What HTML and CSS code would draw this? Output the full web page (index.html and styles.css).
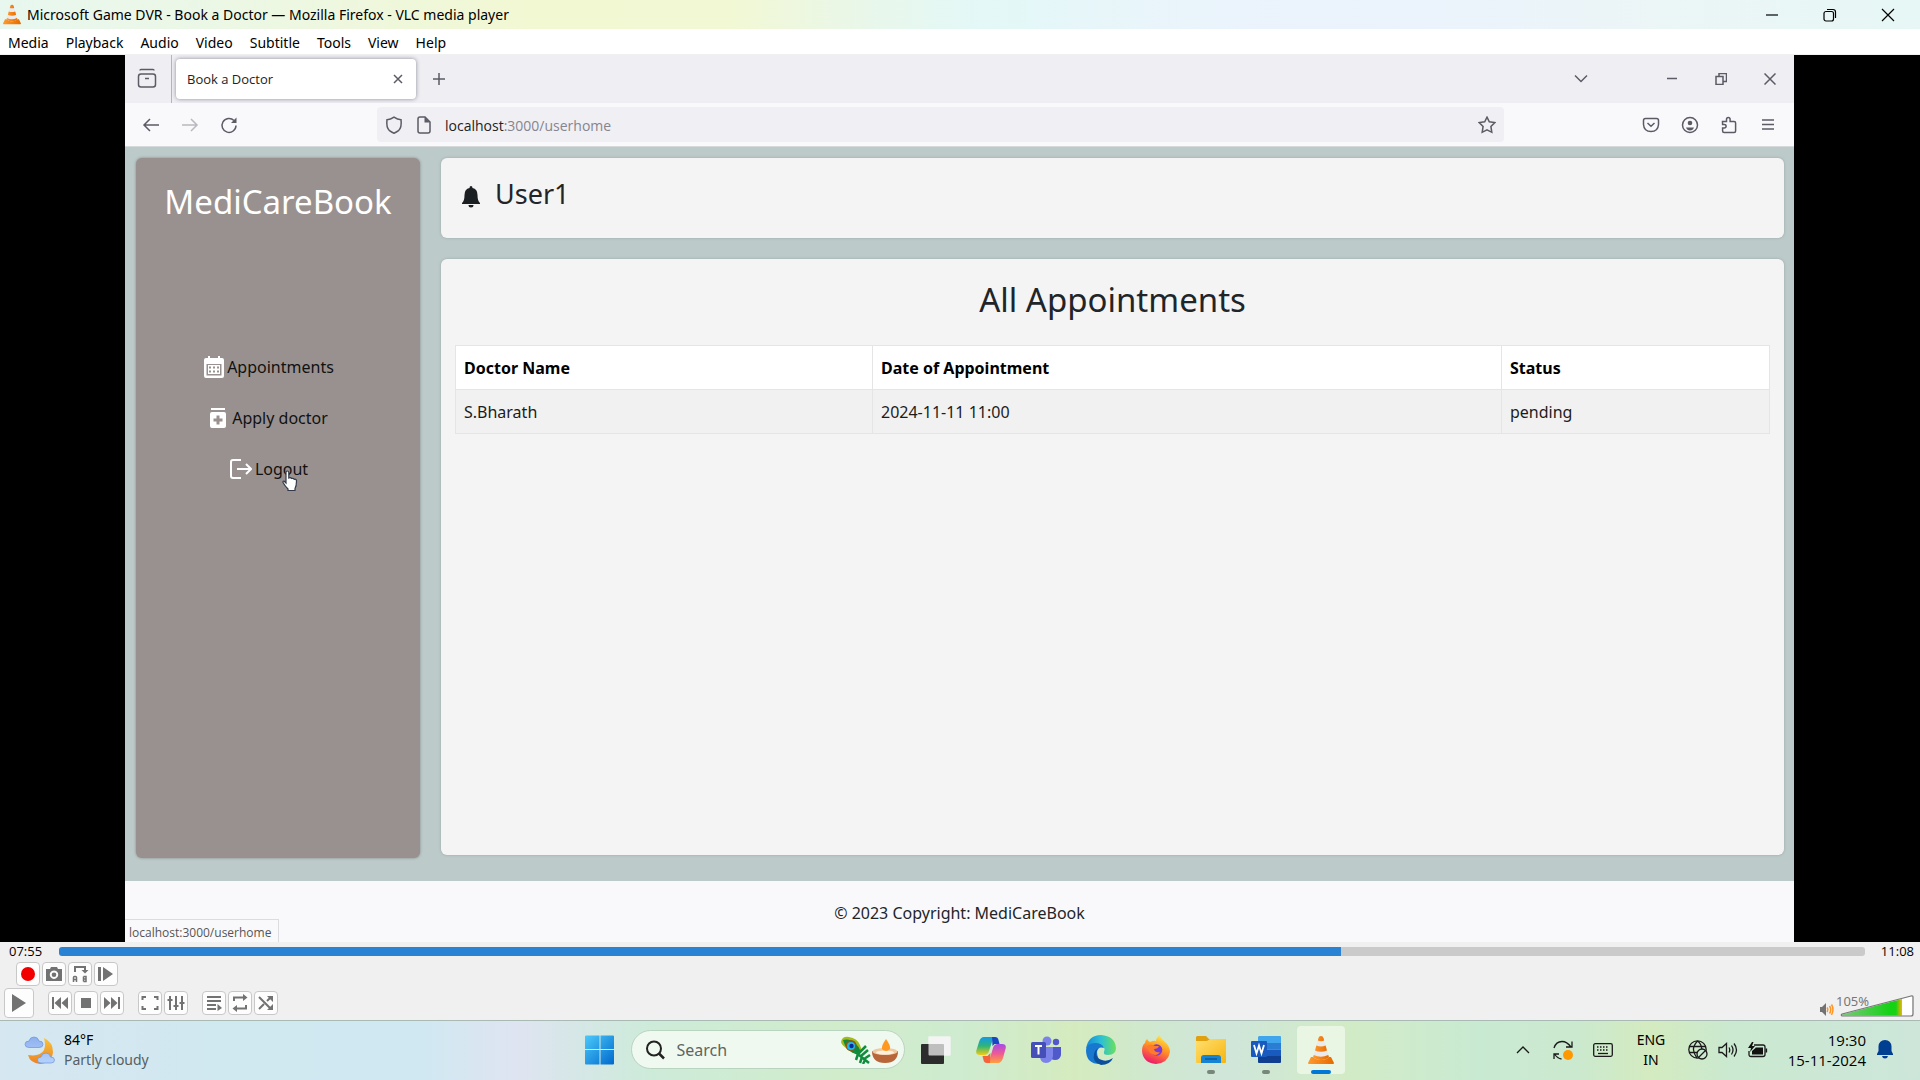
FILE: index.html
```html
<!DOCTYPE html>
<html lang="en">
<head>
<meta charset="utf-8">
<title>VLC media player</title>
<link rel="stylesheet" href="styles.css">
</head>
<body>
<svg width="0" height="0" class="defs" aria-hidden="true">
  <defs>
    <linearGradient id="cone" x1="0" x2="1"><stop offset="0" stop-color="#ff9a2e"/><stop offset="1" stop-color="#e56a00"/></linearGradient>
    <symbol id="vlc" viewBox="0 0 26 30">
      <path d="M3 22h20l3 6q0 1-1 1H1q-1 0-1-1z" fill="url(#cone)"/>
      <path d="M13 1q2 0 2.500 2l5.500 19q-3 3-8 3t-8-3L10.500 3q.5-2 2.500-2z" fill="#e9e9ee"/>
      <path d="M10.500 3q.5-2 2.500-2t2.500 2l.7 2.500q-3 1.300-6.400 0zM8.400 10.500q4.600 1.800 9.200 0l1.400 5q-6 2.500-12 0zM5.800 20q7 3.500 14.400 0l.8 2q-3 3-8 3t-8-3z" fill="url(#cone)"/>
    </symbol>
  </defs>
</svg>

<header class="titlebar">
  <svg class="app-icon"><use href="#vlc"/></svg>
  <h1 class="window-title">Microsoft Game DVR - Book a Doctor — Mozilla Firefox - VLC media player</h1>
  <div class="window-buttons">
    <button aria-label="Minimize"><svg width="14" height="14" viewBox="0 0 14 14"><path d="M1 7h12"/></svg></button>
    <button aria-label="Restore"><svg width="14" height="14" viewBox="0 0 14 14"><rect x="1" y="3.500" width="9.500" height="9.500" rx="2"/><path d="M4 1.500h6q2.500 0 2.500 2.500v6"/></svg></button>
    <button aria-label="Close"><svg width="14" height="14" viewBox="0 0 14 14"><path d="M1 1l12 12M13 1L1 13"/></svg></button>
  </div>
</header>

<nav class="menubar">
  <button>Media</button><button>Playback</button><button>Audio</button><button>Video</button><button>Subtitle</button><button>Tools</button><button>View</button><button>Help</button>
</nav>

<main class="video">
  <div class="browser">
    <div class="tabstrip">
      <button class="tab-manager" aria-label="Recent browsing"><svg width="20" height="22" viewBox="0 0 20 22"><path d="M3 2.500q0-1 1-1h12q1 0 1 1M1.500 8.500q0-2.500 2.500-2.500h12q2.500 0 2.500 2.500v8q0 2.500-2.500 2.500h-12q-2.500 0-2.500-2.500zM8 10.500h4"/></svg></button>
      <div class="tab"><span>Book a Doctor</span><button aria-label="Close tab"><svg width="10" height="10" viewBox="0 0 10 10"><path d="M1 1l8 8M9 1L1 9"/></svg></button></div>
      <button class="new-tab" aria-label="New tab"><svg width="14" height="14" viewBox="0 0 14 14"><path d="M7 1v12M1 7h12"/></svg></button>
      <div class="browser-window-buttons">
        <button class="list-tabs" aria-label="List tabs"><svg width="14" height="10" viewBox="0 0 14 10"><path d="M1 1.500l6 6 6-6"/></svg></button>
        <button aria-label="Minimize browser"><svg width="12" height="12" viewBox="0 0 12 12"><path d="M1 5.500h10"/></svg></button>
        <button aria-label="Restore browser"><svg width="12" height="12" viewBox="0 0 12 12"><path d="M1 3.500h7v8h-7zM4 3.500v-3h7.500v8h-3.500"/></svg></button>
        <button aria-label="Close browser"><svg width="12" height="12" viewBox="0 0 12 12"><path d="M.5.5l11 11M11.500.5l-11 11"/></svg></button>
      </div>
    </div>
    <div class="toolbar">
      <div class="nav-buttons">
        <button aria-label="Back"><svg width="18" height="18" viewBox="0 0 18 18"><path d="M17 9H2M8 3L2 9l6 6"/></svg></button>
        <button aria-label="Forward" class="disabled"><svg width="18" height="18" viewBox="0 0 18 18"><path d="M1 9h15M10 3l6 6-6 6"/></svg></button>
        <button aria-label="Reload"><svg width="18" height="18" viewBox="0 0 18 18"><path d="M14 4.500A7 7 0 1 0 16 9.500"/><path class="solid" d="M16.500 1.500v5.500h-5.500z"/></svg></button>
      </div>
      <div class="urlbar">
        <svg width="18" height="18" viewBox="0 0 18 18"><path d="M9 1.200q3.500 2.500 7 2.500 1 8-2.500 11Q11.500 16.300 9 17.200 6.500 16.300 4.500 14.700 1 11.700 2 3.700q3.500 0 7-2.500z"/></svg>
        <svg width="18" height="18" viewBox="0 0 18 18"><path d="M3 3q0-2 2-2h5l5 5v9q0 2-2 2H5q-2 0-2-2z"/><path class="solid" d="M9.500 1l5.500 5.500h-5.500z"/></svg>
        <span class="url">localhost<span>:3000/userhome</span></span>
        <button aria-label="Bookmark"><svg width="18" height="18" viewBox="0 0 18 18"><path d="M9 1.200l2.300 4.600 5.500.8-3.900 3.800.9 5.900L9 13.900l-4.800 2.400.9-5.900L1.200 6.600l5.500-.8z"/></svg></button>
      </div>
      <div class="extensions">
        <button aria-label="Pocket"><svg width="18" height="18" viewBox="0 0 18 18"><path d="M3.500 2.500h11q2 0 2 2v4q-.5 7-7.500 7t-7.500-7v-4q0-2 2-2zM5.500 7L9 10.200 12.500 7"/></svg></button>
        <button aria-label="Account"><svg width="18" height="18" viewBox="0 0 18 18"><circle cx="9" cy="9" r="7.500"/><circle class="solid" cx="9" cy="7" r="2.300"/><path class="solid" d="M5 11.500h8q-1 3-4 3t-4-3z"/></svg></button>
        <button aria-label="Extensions"><svg width="18" height="18" viewBox="0 0 18 18"><path d="M2.500 5.500h4v-2q0-2 1.800-2t1.800 2v2h4q1.500 0 1.500 1.500v8q0 1.500-1.500 1.500h-10q-1.500 0-1.500-1.500v-3h1.500q2 0 2-1.700t-2-1.700h-1.500z"/></svg></button>
        <button aria-label="Menu"><svg width="18" height="18" viewBox="0 0 18 18"><path d="M3 4h12M3 8.500h12M3 13h12"/></svg></button>
      </div>
    </div>

    <div class="page">
      <div class="layout">
        <aside class="sidebar">
          <h2>MediCareBook</h2>
          <nav>
            <a href="#"><svg width="20" height="22" viewBox="0 0 20 22"><path fill="#fff" fill-rule="evenodd" d="M4 0h2v2h8V0h2v2h2q2 0 2 2v16q0 2-2 2H2q-2 0-2-2V4q0-2 2-2h2zM2.500 8v11.500h15V8z"/><path fill="#fff" d="M4 9h12v9H4z"/><path stroke="#999190" stroke-width="2" d="M5 11.500h2m2 0h2m2 0h2M5 15.500h2m2 0h2m2 0h2"/></svg>Appointments</a>
            <a href="#" class="apply"><svg width="16" height="20" viewBox="0 0 16 20"><path fill="#fff" d="M1 0h14v2H1zM2 4h12q2 0 2 2v12q0 2-2 2H2q-2 0-2-2V6q0-2 2-2z"/><path stroke="#999190" stroke-width="3" d="M8 7.500v9M3.500 12h9"/></svg>Apply doctor</a>
            <a href="#"><svg width="22" height="20" viewBox="0 0 22 20"><path fill="none" stroke="#fff" stroke-width="2" d="M11 1H3q-2 0-2 2v14q0 2 2 2h8M7 10h13M16 5l5 5-5 5"/></svg>Logout</a>
          </nav>
        </aside>
        <div class="content">
          <section class="user-card">
            <svg width="18" height="22" viewBox="0 0 18 22"><path fill="#1c1f22" d="M9 0q1.500 0 1.500 2 5 1 5 7 0 6 2.500 8v1H0v-1q2.500-2 2.500-8 0-6 5-7 0-2 1.500-2zM6.500 19h5q0 2.500-2.500 2.500T6.500 19z"/></svg>
            <h3>User1</h3>
          </section>
          <section class="appointments">
            <h2>All Appointments</h2>
            <table>
              <thead><tr><th class="col-name">Doctor Name</th><th class="col-date">Date of Appointment</th><th>Status</th></tr></thead>
              <tbody><tr><td>S.Bharath</td><td>2024-11-11 11:00</td><td>pending</td></tr></tbody>
            </table>
          </section>
        </div>
      </div>
      <footer>© 2023 Copyright: MediCareBook</footer>
      <div class="link-status">localhost:3000/userhome</div>
      <svg class="pointer" width="18" height="22" viewBox="0 0 18 22"><path fill="#fff" stroke="#333a4a" stroke-width="1.200" d="M5 2.500q0-1.500 1.300-1.500t1.500 1.500V8q2-.8 2.700.5 2-.6 2.700.8 2.300-.5 2.300 1.700 0 5-1.500 7.500v2H7v-1.500Q4 16 2 12.500q-.3-1.700 1-1.500l2 2z"/></svg>
    </div>
  </div>
</main>

<section class="player" aria-label="Playback controls">
  <div class="seek">
    <label for="seek">07:55</label>
    <input id="seek" type="range" min="0" max="668" value="475">
    <span>11:08</span>
  </div>
  <div class="button-row upper">
    <button aria-label="Record"><svg viewBox="0 0 24 24"><circle cx="12" cy="12" r="7" fill="#f20000"/></svg></button>
    <button aria-label="Snapshot"><svg viewBox="0 0 24 24"><path class="f" fill-rule="evenodd" d="M4 7h4l1-2h6l1 2h4v12H4zM12 8.500a4.200 4.200 0 1 0 .01 0z"/><circle class="f" cx="12" cy="12.700" r="2.300"/></svg></button>
    <button aria-label="Loop A to B"><svg viewBox="0 0 24 24"><path class="s" d="M7 10V5h10v4"/><path class="f" d="M13.500 8h7L17 11.500z"/><path class="s thin" d="M5.500 20v-4.500q0-1 1-1h1q1 0 1 1V20M5.500 17.500h3M15.500 14.500v5M15.500 14.500h2.500v5h-2.500M15.500 17h3"/></svg></button>
    <button aria-label="Frame by frame"><svg viewBox="0 0 24 24"><path class="f" d="M4 5h3v14H4zM9 5l10 7-10 7z"/></svg></button>
  </div>
  <div class="button-row lower">
    <button class="play" aria-label="Play"><svg viewBox="0 0 30 30"><path class="f" d="M8 6l14 9-14 9z"/></svg></button>
    <div class="group">
      <button aria-label="Previous"><svg viewBox="0 0 24 24"><path class="f" d="M4 6h2v12H4zM13 6v12l-6.500-6zM20 6v12l-6.500-6z"/></svg></button>
      <button aria-label="Stop"><svg viewBox="0 0 24 24"><path class="f" d="M7 7h10v10H7z"/></svg></button>
      <button aria-label="Next"><svg viewBox="0 0 24 24"><path class="f" d="M18 6h2v12h-2zM4 6v12l6.500-6zM11 6v12l6.500-6z"/></svg></button>
    </div>
    <div class="group">
      <button aria-label="Fullscreen"><svg viewBox="0 0 24 24"><path class="s" d="M4.500 9V6H8M16 6h3.500v3M19.500 15v3H16M8 18H4.500v-3"/></svg></button>
      <button aria-label="Extended settings"><svg viewBox="0 0 24 24"><path class="s" d="M6 5v14M12 5v14M18 5v14M3.500 9h5M9.500 15h5M15.500 12h5"/></svg></button>
    </div>
    <div class="group">
      <button aria-label="Playlist"><svg viewBox="0 0 24 24"><path class="s" d="M5 6h14M5 10h14M5 14h9M5 18h9"/><path class="f" d="M15.500 13l4.500 4-4.500 3z"/></svg></button>
      <button aria-label="Repeat"><svg viewBox="0 0 24 24"><path class="s" d="M6 10V6.500h11M18 14v3.500H7"/><path class="f" d="M15 3l4.500 3.500L15 10zM9 14v7l-4.500-3.500z"/></svg></button>
      <button aria-label="Shuffle"><svg viewBox="0 0 24 24"><path class="s" d="M5 6l12 12M5 18l5-5M13 10l4-4"/><path class="f" d="M13 5h6v6zM19 13v6h-6z"/></svg></button>
    </div>
    <div class="volume">
      <svg width="14" height="14" viewBox="0 0 14 14"><path class="f" d="M0 4h2l4-4v13l-4-4H0z"/><path fill="none" stroke="#ff9420" stroke-width="1.500" d="M7 4.500q1.500 2 0 4.500M9.500 3q2.500 4 0 7.500M11.500 1.500q3 5 0 10.500"/></svg>
      <div class="wedge">
        <svg width="74" height="22" viewBox="0 0 74 22"><defs><linearGradient id="vol"><stop offset="0" stop-color="#7cc87c"/><stop offset=".8" stop-color="#14d214"/><stop offset=".9" stop-color="#18d214"/><stop offset="1" stop-color="#ffb000"/></linearGradient></defs><path d="M2 19.500L62 4v16.500H2z" fill="url(#vol)"/><path d="M62 4L72 1.500v19H62z" fill="#fff"/><path d="M2 19L71 1q2-.5 2 1v17q0 2-2 2H2q-1.500-1 0-2z" fill="none" stroke="#777" stroke-width="1.200"/></svg>
        <span>105%</span>
        <input type="range" min="0" max="125" value="105" aria-label="Volume">
      </div>
    </div>
  </div>
</section>

<footer class="taskbar">
  <button class="weather">
    <svg width="32" height="30" viewBox="0 0 32 30"><defs><linearGradient id="moon" x2="0" y2="1"><stop stop-color="#f9c33a"/><stop offset="1" stop-color="#ea8226"/></linearGradient><linearGradient id="cloud" x2="0" y2="1"><stop stop-color="#8fb0ef"/><stop offset="1" stop-color="#b5d2fa"/></linearGradient></defs><path fill="url(#moon)" d="M20 3q9 4 9 14-1 11-13 12Q6 28 4 20q12 2 16-5 2-5 0-12z"/><path fill="url(#cloud)" stroke="#6c94dd" stroke-width=".7" d="M5 12.500q-4 0-4-3.200t4-3.300q1-4 5-4t5 4q4 0 4 3.300t-4 3.200zM17 28q-3.500 0-3.500-3t3.500-3q1-4 5-4t4.500 4q4 0 4 3t-3.500 3z"/></svg>
    <span><span class="temp">84°F</span><span class="sky">Partly cloudy</span></span>
  </button>

  <div class="apps">
    <button aria-label="Start"><svg width="30" height="30" viewBox="0 0 30 30"><defs><linearGradient id="win" x2="1" y2="1"><stop stop-color="#4cc9fb"/><stop offset="1" stop-color="#0069cc"/></linearGradient></defs><path fill="url(#win)" d="M1 .5h13.500V14H0V1.500q0-1 1-1zM15.500.5H28q1 0 1 1V14H15.500zM0 15h14.500v14.500H1q-1 0-1-1zM15.500 15H29v13.500q0 1-1 1H15.500z"/></svg></button>
    <label class="search">
      <svg width="20" height="20" viewBox="0 0 20 20"><circle cx="9" cy="8.500" r="7" fill="none" stroke="#222" stroke-width="2"/><path d="M14 13.500l5 5" stroke="#222" stroke-width="2.500"/></svg>
      <input type="text" placeholder="Search" aria-label="Search">
      <svg width="58" height="28" viewBox="0 0 58 28"><path d="M1 6Q2 0 9 1q8 1 11 8 3 6-2 9-6 0-10-5-6-3-7-7z" fill="#9fbc1c"/><path d="M3 4q7-2 13 4t3 10q-7 0-11-5Q4 9 3 4z" fill="#0e8a3e"/><circle cx="11" cy="9.500" r="5.500" fill="#8a5a14"/><circle cx="11" cy="10" r="4" fill="#19b8ee"/><circle cx="11.500" cy="10" r="2.200" fill="#0a2a9a"/><path d="M14 15l15 12M18 18l8-8M18 18l-2 6M21 20l7-6M22 21l-2 6M24 23l6-4M25 24l-2 4" stroke="#118c3c" stroke-width="2.500"/><path d="M32 15q0 12 13 12t13-12z" fill="#b8653a"/><ellipse cx="45" cy="15.500" rx="12.500" ry="3.500" fill="#f0c9a0"/><ellipse cx="45" cy="16.500" rx="9" ry="2" fill="#fdf0dc"/><path d="M46 3q5 7 4 10-4 4-8 0-1-3 4-10z" fill="#ff9820"/></svg>
    </label>
    <button aria-label="Task view"><svg width="30" height="28" viewBox="0 0 30 28"><rect y="8" width="23" height="20" rx="1" fill="#2c2c2c"/><rect x="7.500" y=".5" width="22" height="19" rx="1" fill="#f8f8f8" fill-opacity=".72"/><path d="M23 .5h6.500v19H23V8H7.500V.5z" fill="#f4f4f4"/></svg></button>
    <button aria-label="Copilot"><svg width="30" height="28" viewBox="0 0 30 28"><defs><linearGradient id="cpa" x2="0" y2="1"><stop stop-color="#1698e8"/><stop offset=".5" stop-color="#2cb57a"/><stop offset="1" stop-color="#f2cc10"/></linearGradient><linearGradient id="cpb" x2="0" y2="1"><stop stop-color="#a64ae8"/><stop offset=".5" stop-color="#ee5a96"/><stop offset="1" stop-color="#ffa03c"/></linearGradient></defs><path fill="url(#cpa)" d="M8 1h12q-3 1-4 5l-3 9q-1 4-5 4H4q-5 0-3.500-5L3 6q1.500-5 5-5z"/><path fill="#1748c4" d="M16 1h3q3 0 3.500 3l1 4h-5l-2 2z"/><path fill="url(#cpb)" d="M22 27H10q3-1 4-5l3-10q1-4 5-4h4q5 0 3.500 5L27 22q-1.500 5-5 5z"/><path fill="#f4633a" d="M14 27h-3q-3 0-3.500-3l-1-4h5l3-3z"/></svg></button>
    <button aria-label="Teams"><svg width="30" height="28" viewBox="0 0 30 28"><circle cx="16" cy="5" r="4.500" fill="#7b83eb"/><circle cx="25" cy="6" r="3.200" fill="#5059c9"/><path d="M19 11h11v8q-1 5-6 5t-5-5z" fill="#5059c9"/><path d="M9 11h13v9q-1 7-7 7t-6-7z" fill="#7b83eb"/><rect y="6" width="15" height="16" rx="1.500" fill="#464eb8"/><path d="M4 10h7M7.500 10v8.500" stroke="#fff" stroke-width="2"/></svg></button>
    <button aria-label="Edge"><svg width="30" height="30" viewBox="0 0 30 30"><defs><linearGradient id="eda"><stop stop-color="#1688d8"/><stop offset=".5" stop-color="#2cc0d4"/><stop offset="1" stop-color="#6ce05c"/></linearGradient></defs><path fill="url(#eda)" d="M0 14Q2 0 15 0q14 1 15 13 0 7-8 7-5 0-4-3 2-5-3-6Q8 7 0 14z"/><path fill="#1878d0" d="M0 15Q1 8 9 8q7 0 9 5-6-2-7 4 0 7 6 12h-3Q0 29 0 15z"/><path fill="#0c4f9c" d="M12 13q-5 9 4 12 5 2 11-2-3 7-12 7Q6 27 8 19q1-4 4-6z"/></svg></button>
    <button aria-label="Firefox"><svg width="28" height="29" viewBox="0 0 28 29"><defs><linearGradient id="ffa" x1=".8" y1="0" x2=".4" y2="1"><stop stop-color="#fff14a"/><stop offset=".45" stop-color="#ff9a22"/><stop offset="1" stop-color="#f0186c"/></linearGradient></defs><path fill="url(#ffa)" d="M5 4q1 2 3 3 4-2 6-1Q14 3 18 0q0 3 4 6 6 5 6 11-2 11-14 12Q1 28 0 16 0 10 3 8q0-2 2-4z"/><circle cx="14.500" cy="15" r="5.800" fill="#7a3ad8"/><path d="M5 11q4-3 8 0h4q-1 3-5 3 1 4 6 3-3 5-8 2-4-2-5-8z" fill="#ff7a2a"/></svg></button>
    <button aria-label="File Explorer" class="open"><svg width="30" height="27" viewBox="0 0 30 27"><defs><linearGradient id="fold" x2="1" y2="1"><stop stop-color="#ffdf70"/><stop offset="1" stop-color="#f7b50e"/></linearGradient></defs><path fill="#e0a010" d="M1 0h9l3 3h16v6H0V1z"/><path fill="url(#fold)" d="M0 5h11l3-2h16v23q0 1-1 1H1q-1 0-1-1z"/><path fill="#1683d3" d="M5 27v-5q0-3 3-3h14q3 0 3 3v5z"/><path stroke="#0c5a9a" stroke-width="1.500" d="M9 23h12"/></svg></button>
    <button aria-label="Word" class="open"><svg width="30" height="27" viewBox="0 0 30 27"><path fill="#41a5ee" d="M8 0h21q1 0 1 1v6H7V1z"/><path fill="#2b7cd3" d="M7 7h23v6.500H7z"/><path fill="#185abd" d="M7 13.500h23V20H7z"/><path fill="#103f91" d="M7 20h23v6q0 1-1 1H8q-1 0-1-1z"/><rect y="5" width="16" height="16" rx="1" fill="#185abd"/><path d="M3 9l2.500 8.500L8 9.500l2.500 8L13 9" fill="none" stroke="#fff" stroke-width="1.800"/></svg></button>
    <button aria-label="VLC media player" class="active"><svg width="26" height="30"><use href="#vlc"/></svg></button>
  </div>

  <div class="tray">
    <button aria-label="Show hidden icons"><svg width="14" height="8" viewBox="0 0 14 8"><path d="M1 7l6-6 6 6"/></svg></button>
    <button aria-label="Updates"><svg width="20" height="20" viewBox="0 0 20 20"><path d="M1 8Q3 1.500 9 1.500q5 0 9 5.500M19 1.500V7h-6M1 19v-5h5M1.500 14q3 4.500 7 5"/><circle cx="15" cy="15" r="5" fill="#ff9800" stroke="none"/></svg></button>
    <button aria-label="Touch keyboard"><svg width="20" height="14" viewBox="0 0 20 14"><rect x=".7" y=".7" width="18.600" height="12.600" rx="1.500"/><path stroke-dasharray="1.500 1.500" d="M4 4h12M4 7h12"/><path d="M5 10.500h10"/></svg></button>
    <button class="lang">ENG<br>IN</button>
    <button class="status" aria-label="Network, sound and battery">
      <svg width="20" height="20" viewBox="0 0 20 20"><circle cx="9.500" cy="9.500" r="8.700"/><path d="M1 6.500h17M1 12.500h8M9.500 1Q5 6 5.500 10t3.500 8M9.500 1q4 3 4.300 8"/><circle cx="14" cy="14" r="5" fill="#cbe9d0"/><path d="M10.500 17.500l7-7"/></svg>
      <svg width="20" height="16" viewBox="0 0 20 16"><path d="M1 5.500h3l4.500-4v13l-4.500-4H1zM11 5.500q1.500 2.500 0 5M13.500 3.500q3 4.500 0 9M16 1.500q5 6.500 0 13"/></svg>
      <svg width="20" height="16" viewBox="0 0 20 16"><path d="M6 3h9q2 0 2 2v7.500q0 2-2 2H3q-2 0-2-2V9M18.500 6.500v4"/><path d="M7.500 5.500h7.500v7H4V9l3.500-3zM4 0L0 6h3L2 10l5-6H4l1.500-4z" fill="#111" stroke="none"/></svg>
    </button>
    <button class="clock">19:30<br>15-11-2024</button>
    <button aria-label="Notifications"><svg width="16" height="19" viewBox="0 0 16 19"><path fill="#003e92" stroke="none" d="M8 0q6 0 6.500 6.500V11L16 14v1H0v-1l1.500-3V6.500Q2 0 8 0zM5 16h6q-.5 2.500-3 2.500T5 16z"/></svg></button>
  </div>
</footer>
</body>
</html>
```
FILE: styles.css
```css
* { box-sizing: border-box; }

body {
  margin: 0;
  min-height: 100vh;
  display: flex;
  flex-direction: column;
  font-family: "Noto Sans", "Open Sans", sans-serif;
  font-size: 14px;
  line-height: 20px;
  color: #000;
  background: #f0f0f0;
}

h1, h2, h3 { margin: 0; font-weight: 400; }

button {
  display: flex;
  align-items: center;
  justify-content: center;
  margin: 0;
  padding: 0;
  border: 0;
  background: none;
  font: inherit;
  color: inherit;
}

svg { flex: none; display: block; }
.defs { position: absolute; }

/* Title bar and menus */
.titlebar {
  display: flex;
  align-items: center;
  gap: 6px;
  height: 29px;
  padding: 0 3px;
  background: linear-gradient(90deg, #e8f7ef 0, #edf7e2 15%, #f2f8d2 28%, #f2f8d4 38%, #e9f7ea 45%, #e3f8f7 51%, #eaf4fb 62%, #ebf3fc 75%, #ebf6f6 87%, #e6f7f5 100%);
}
.app-icon { width: 18px; height: 21px; }
.window-title { flex: 1; font-size: 14px; }
.window-buttons { display: flex; }
.window-buttons button { width: 58px; height: 28px; }
.window-buttons svg { fill: none; stroke: #000; stroke-width: 1.2; }

.menubar {
  display: flex;
  gap: 17px;
  height: 26px;
  padding: 2px 8px 0;
  background: #fff;
  border-bottom: 1px solid #f0f0f0;
}

/* Video area */
.video {
  flex: 1;
  display: flex;
  padding: 0 126px 0 125px;
  background: #000;
}
.browser {
  flex: 1;
  display: flex;
  flex-direction: column;
  background: #bccaca;
}
.browser button svg, .urlbar > svg { fill: none; stroke: #5b5b66; stroke-width: 1.5; }
.browser .solid { fill: #5b5b66; stroke: none; }

.tabstrip {
  display: flex;
  align-items: center;
  height: 48px;
  background: #efeef3;
}
.tab-manager {
  width: 47px;
  height: 48px;
  padding-right: 2px;
  border-right: 1px solid #b5b4bb;
}
.tab {
  display: flex;
  align-items: center;
  justify-content: space-between;
  width: 240px;
  height: 40px;
  margin-left: 4px;
  padding: 0 13px 0 11px;
  border-radius: 4px;
  background: #fff;
  box-shadow: 0 0 4px #8a8a96;
  font-family: "Open Sans", sans-serif;
  font-size: 13px;
  color: #222;
}
.new-tab { width: 46px; height: 40px; }
.browser-window-buttons { display: flex; margin-left: auto; }
.browser-window-buttons button { width: 49px; height: 40px; }
.browser-window-buttons .list-tabs { margin-right: 42px; }

.toolbar {
  display: grid;
  grid-template-columns: 252px 1127px 1fr;
  align-items: center;
  height: 44px;
  background: #f9f9fb;
  border-bottom: 1px solid #d6dadb;
}
.nav-buttons { display: flex; gap: 21px; padding-left: 17px; }
.disabled { opacity: .4; }
.urlbar {
  display: flex;
  align-items: center;
  gap: 12px;
  height: 35px;
  padding: 0 8px;
  border-radius: 4px;
  background: #f0eff4;
}
.url {
  flex: 1;
  padding-top: 2px;
  font-family: "Open Sans", sans-serif;
  color: #222;
}
.url span { color: #85858f; }
.extensions { display: flex; justify-content: flex-end; gap: 21px; padding-right: 17px; }

/* MediCareBook page */
.page {
  position: relative;
  flex: 1;
  display: flex;
  flex-direction: column;
}
.layout {
  flex: 1;
  display: flex;
  gap: 21px;
  padding: 11px 10px 23px 11px;
}
.sidebar {
  width: 284px;
  border-radius: 6px;
  background: #999190;
  box-shadow: 0 0 3px #848886;
  text-align: center;
}
.sidebar h2 {
  padding-top: 22px;
  font-size: 33px;
  line-height: 44px;
  color: #fff;
}
.sidebar nav {
  display: flex;
  flex-direction: column;
  gap: 27px;
  align-items: center;
  padding: 131px 18px 0 0;
  font-size: 16px;
  line-height: 24px;
}
.sidebar a {
  display: flex;
  align-items: center;
  gap: 3px;
  color: #111;
  text-decoration: none;
}
.sidebar .apply { gap: 6px; }
.content {
  flex: 1;
  display: flex;
  flex-direction: column;
  gap: 21px;
  padding-bottom: 3px;
}
.content section {
  border-radius: 6px;
  background: #f4f4f4;
  box-shadow: 0 0 3px #98a6a5;
}
.user-card {
  display: flex;
  gap: 15px;
  height: 80px;
  padding: 20px 21px;
}
.user-card svg { margin-top: 8px; }
.user-card h3 { font-size: 27px; line-height: 32px; color: #212529; }
.appointments { flex: 1; padding: 20px 14px; }
.appointments h2 {
  font-size: 33px;
  line-height: 42px;
  text-align: center;
  color: #212529;
}
table {
  width: 100%;
  margin-top: 24px;
  border-collapse: collapse;
  table-layout: fixed;
  font-size: 16px;
  line-height: 24px;
}
th, td {
  height: 44px;
  padding: 9px 8px;
  border: 1px solid #e3e5e7;
  text-align: left;
}
th { background: #fff; }
td { background: #f1f1f1; color: #1c1c1c; }
.col-name { width: 417px; }
.col-date { width: 629px; }
.page footer {
  height: 61px;
  padding-top: 20px;
  background: #f9f9fb;
  font-size: 16px;
  line-height: 24px;
  text-align: center;
  color: #212529;
}
.link-status {
  position: absolute;
  left: 0;
  bottom: 0;
  height: 23px;
  padding: 3px 7px 0 4px;
  border: 1px solid #dcdce0;
  border-width: 1px 1px 0 0;
  background: #f9f9fb;
  font-family: "Open Sans", sans-serif;
  font-size: 12px;
  color: #555;
}
.pointer { position: absolute; left: 156px; top: 323px; }

/* Player controls */
.player { height: 78px; }
.seek {
  display: flex;
  align-items: center;
  height: 18px;
  padding: 0 6px 0 9px;
  font-family: "Open Sans", sans-serif;
  font-size: 13px;
}
.seek label { width: 50px; }
.seek input {
  flex: 1;
  appearance: none;
  height: 9px;
  margin: 0;
  border-radius: 3px;
  background: linear-gradient(90deg, #2a82d4 71%, #cacaca 71%);
}
.seek input::-webkit-slider-thumb { appearance: none; width: 1px; height: 1px; }
.seek span { margin-left: 16px; }

.button-row { display: flex; align-items: center; gap: 2px; }
.upper { padding: 2px 16px; }
.lower { gap: 14px; padding-left: 4px; padding-right: 6px; }
.group { display: flex; gap: 2px; }
.button-row button {
  width: 24px;
  height: 24px;
  border: 1px solid #c8c8c8;
  border-radius: 4px;
  background: #fdfdfd;
}
.button-row button svg { width: 24px; height: 24px; }
.button-row .play { width: 30px; height: 30px; }
.button-row .play svg { width: 30px; height: 30px; }
.f { fill: #727272; }
.s { fill: none; stroke: #727272; stroke-width: 2; }
.s.thin { stroke-width: 1.5; }
.volume { display: flex; align-items: flex-end; gap: 6px; margin-left: auto; padding-top: 6px; }
.wedge { position: relative; }
.wedge span {
  position: absolute;
  left: -4px;
  top: -4px;
  font-size: 13px;
  color: #777;
}
.wedge input { position: absolute; inset: 0; width: 100%; margin: 0; opacity: 0; }

/* Taskbar */
.taskbar {
  display: grid;
  grid-template-columns: 1fr auto 1fr;
  align-items: center;
  height: 60px;
  padding-bottom: 2px;
  border-top: 1px solid #a9bab5;
  background: linear-gradient(90deg, #d6e7f1 0, #d0e8f0 12%, #d0e8f2 22%, #dfe4f1 27%, #d8e6ea 29%, #cdebd9 34%, #d1ecca 44%, #cfebd0 50%, #d5ebbf 56%, #cfe8cf 60%, #cfe6da 64%, #d2ebc6 70%, #c9ead2 77%, #cbe9cf 82%, #d4ebc0 86%, #cbe9d0 90%, #cde6da 100%);
}
.weather { justify-self: start; gap: 8px; margin-left: 24px; text-align: left; }
.weather .temp, .weather .sky { display: block; }
.sky { color: #555f64; }
.apps { display: flex; align-items: center; gap: 7px; }
.apps button { position: relative; width: 48px; height: 48px; border-radius: 4px; }
.apps .active { background: #eaf6e4; }
.open::after, .active::after {
  content: "";
  position: absolute;
  bottom: 0;
  width: 8px;
  height: 4px;
  border-radius: 2px;
  background: #77877a;
}
.active::after { width: 20px; background: #0078d7; }
.search {
  display: flex;
  align-items: center;
  gap: 12px;
  width: 274px;
  height: 39px;
  padding: 0 6px 0 13px;
  border: 1px solid #b9d4bf;
  border-radius: 20px;
  background: #f0f9f0;
}
.search input {
  flex: 1;
  min-width: 0;
  padding: 0;
  border: 0;
  outline: 0;
  background: none;
  font: inherit;
  font-size: 16px;
}
.search input::placeholder { color: #5c665f; opacity: 1; }
.tray {
  justify-self: end;
  display: flex;
  align-items: center;
  padding-right: 27px;
}
.tray svg { fill: none; stroke: #1a1a1a; stroke-width: 1.3; }
.tray button { min-width: 40px; height: 48px; }
.tray .lang { width: 56px; }
.status { gap: 10px; padding-left: 9px; }
.tray .clock {
  width: 98px;
  justify-content: flex-end;
  font-family: "Open Sans", sans-serif;
  font-size: 15px;
  text-align: right;
}
.tray button:last-child { min-width: 16px; margin-left: 11px; }
```
